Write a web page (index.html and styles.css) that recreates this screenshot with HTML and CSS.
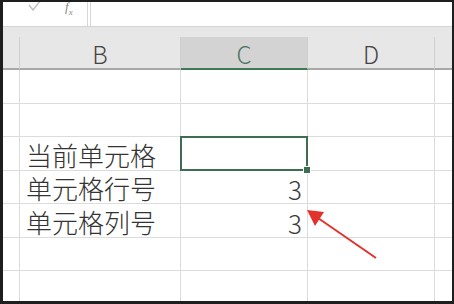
FILE: index.html
```html
<!DOCTYPE html>
<html lang="zh-CN">
<head>
  <meta charset="UTF-8">
  <title>ROW / COLUMN</title>
  <link rel="stylesheet" href="styles.css">
</head>
<body>

<div class="frame">
  <!-- 编辑栏 -->
  <div class="formula-bar">
    <div class="fx-tools">
      <svg class="tick" width="16" height="10" viewBox="0 0 16 10">
        <path d="M2 3 L6 8 L14 -2" fill="none" stroke="#c4c4c4" stroke-width="1.6"/>
      </svg>
      <span class="fx">f<sub>x</sub></span>
    </div>
    <div class="fx-input"></div>
  </div>
  <div class="ribbon-gap"></div>

  <!-- 表格 -->
  <div class="sheet">
    <div class="col-head corner"></div>
    <div class="col-head">B</div>
    <div class="col-head active">C</div>
    <div class="col-head">D</div>
    <div class="col-head last"></div>

    <div class="cell row-head"></div><div class="cell"></div><div class="cell"></div><div class="cell"></div><div class="cell last"></div>
    <div class="cell row-head"></div><div class="cell"></div><div class="cell"></div><div class="cell"></div><div class="cell last"></div>
    <div class="cell row-head"></div><div class="cell label">当前单元格</div><div class="cell selected"><span class="handle"></span></div><div class="cell"></div><div class="cell last"></div>
    <div class="cell row-head"></div><div class="cell label">单元格行号</div><div class="cell num">3</div><div class="cell"></div><div class="cell last"></div>
    <div class="cell row-head"></div><div class="cell label">单元格列号</div><div class="cell num">3</div><div class="cell"></div><div class="cell last"></div>
    <div class="cell row-head"></div><div class="cell"></div><div class="cell"></div><div class="cell"></div><div class="cell last"></div>
    <div class="cell row-head"></div><div class="cell"></div><div class="cell"></div><div class="cell"></div><div class="cell last"></div>
  </div>

  <!-- 红色箭头 -->
  <svg class="arrow" width="454" height="304" viewBox="0 0 454 304">
    <line x1="376" y1="258" x2="318" y2="218" stroke="#e3322b" stroke-width="2"/>
    <polygon points="307,210 324,212 315,226" fill="#e3322b"/>
  </svg>
</div>

</body>
</html>
```

FILE: styles.css
```css
/* === 全体 === */
html, body {
  margin: 0;
  padding: 0;
  background: #fff;
}

.frame {
  position: relative;
  width: 454px;
  height: 304px;
  box-sizing: border-box;
  border-style: solid;
  border-color: #1e1e1e;
  border-width: 2px 2px 3px 3px;
  overflow: hidden;
  font-family: "Noto Sans CJK SC", "Noto Sans", sans-serif;
  color: #3a3a3a;
}

/* === 编辑栏 === */
.formula-bar {
  display: flex;
  height: 24px;
  border-bottom: 1px solid #d4d4d4;
  background: #fff;
}

.fx-tools {
  display: flex;
  align-items: flex-start;
  width: 84px;
  border-right: 1px solid #d8d8d8;
}

.tick {
  margin: 0 0 0 24px;
}

.fx {
  margin-left: 22px;
  margin-top: -3px;
  font-family: "Liberation Serif", serif;
  font-style: italic;
  font-size: 13px;
  color: #8a8a8a;
}

.fx sub {
  font-size: 9px;
}

.fx-input {
  flex: 1;
  margin-left: 2px;
  border-left: 1px solid #d8d8d8;
}

.ribbon-gap {
  height: 10px;
  background: #e7e7e7;
}

/* === シート === */
.sheet {
  display: grid;
  grid-template-columns: 17px 161px 127px 127px 1fr;
  grid-template-rows: 33px;
  grid-auto-rows: 33.5px;
}

.col-head {
  display: flex;
  align-items: center;
  justify-content: center;
  box-sizing: border-box;
  background: #e7e7e7;
  border-right: 1px solid #cfcfcf;
  border-bottom: 2px solid #a8a8a8;
  font-size: 24px;
  font-weight: 300;
  color: #444;
  padding-top: 2px;
}

.col-head.active {
  background: #d3d3d3;
  color: #4b7560;
  border-bottom-color: #3f7a57;
}

.col-head.last,
.cell.last {
  border-right: none;
}

.cell {
  position: relative;
  box-sizing: border-box;
  border-right: 1px solid #dcdcdc;
  border-bottom: 1px solid #dcdcdc;
  display: flex;
  align-items: flex-end;
  font-size: 26px;
  font-weight: 300;
  line-height: 1;
}

.label {
  padding: 0 0 2px 6px;
  white-space: nowrap;
  color: #333;
}

.num {
  justify-content: flex-end;
  padding: 0 5px 1px 0;
}

/* 选中单元格 */
.selected::after {
  content: "";
  position: absolute;
  top: -1px;
  left: -1px;
  right: -1px;
  bottom: -1px;
  border: 2px solid #3f6d53;
}

.handle {
  position: absolute;
  right: -4px;
  bottom: -4px;
  width: 6px;
  height: 6px;
  background: #3f6d53;
  border: 1px solid #fff;
  z-index: 2;
}

/* 矢印 */
.arrow {
  position: absolute;
  top: -2px;
  left: -3px;
  pointer-events: none;
}
```
